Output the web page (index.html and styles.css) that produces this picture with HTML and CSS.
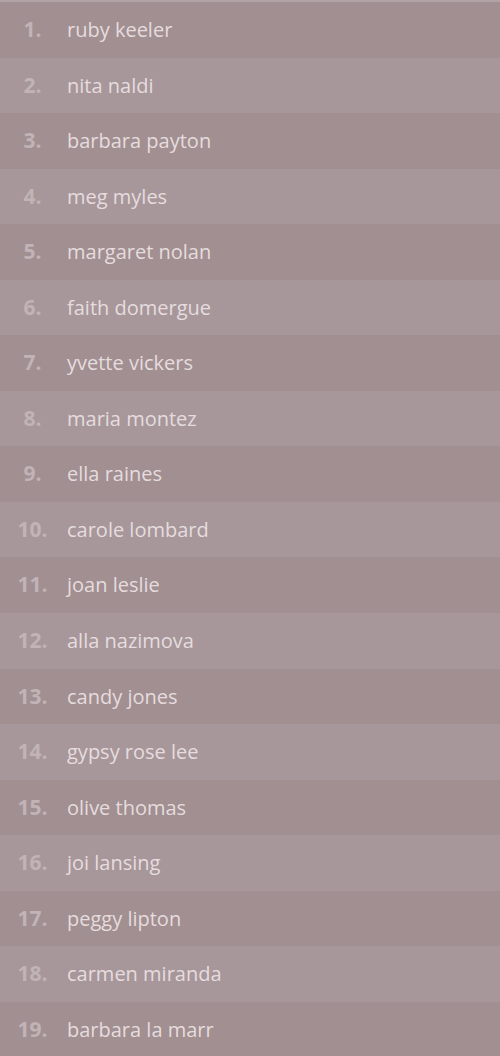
FILE: index.html
```html
<!DOCTYPE html>
<html lang="en">

<head>
    <meta charset="UTF-8">
    <meta name="viewport" content="width=device-width, initial-scale=1.0">
    <title>Actresses</title>
    <link rel="stylesheet" href="styles.css">
</head>

<body>
    <ol class="list">
        <li class="item"><span class="num">1.</span><span class="name">ruby keeler</span></li>
        <li class="item"><span class="num">2.</span><span class="name">nita naldi</span></li>
        <li class="item"><span class="num">3.</span><span class="name">barbara payton</span></li>
        <li class="item"><span class="num">4.</span><span class="name">meg myles</span></li>
        <li class="item"><span class="num">5.</span><span class="name">margaret nolan</span></li>
        <li class="item"><span class="num">6.</span><span class="name">faith domergue</span></li>
        <li class="item"><span class="num">7.</span><span class="name">yvette vickers</span></li>
        <li class="item"><span class="num">8.</span><span class="name">maria montez</span></li>
        <li class="item"><span class="num">9.</span><span class="name">ella raines</span></li>
        <li class="item"><span class="num">10.</span><span class="name">carole lombard</span></li>
        <li class="item"><span class="num">11.</span><span class="name">joan leslie</span></li>
        <li class="item"><span class="num">12.</span><span class="name">alla nazimova</span></li>
        <li class="item"><span class="num">13.</span><span class="name">candy jones</span></li>
        <li class="item"><span class="num">14.</span><span class="name">gypsy rose lee</span></li>
        <li class="item"><span class="num">15.</span><span class="name">olive thomas</span></li>
        <li class="item"><span class="num">16.</span><span class="name">joi lansing</span></li>
        <li class="item"><span class="num">17.</span><span class="name">peggy lipton</span></li>
        <li class="item"><span class="num">18.</span><span class="name">carmen miranda</span></li>
        <li class="item"><span class="num">19.</span><span class="name">barbara la marr</span></li>
    </ol>
</body>

</html>
```

FILE: styles.css
```css
body {
    margin: 0;
    font-family: "Open Sans", sans-serif;
    background-color: #a18f91;
    overflow: hidden;
}

.list {
    list-style: none;
    margin: 0;
    padding: 0;
    border-top: 2px solid #b2a3a6;
}

.item {
    display: flex;
    align-items: baseline;
    height: 55.55px;
    line-height: 55.55px;
    background-color: #a18f91;
}

.item:nth-child(even) {
    background-color: #a7979b;
}

.num {
    width: 65px;
    text-align: center;
    font-size: 21px;
    font-weight: bold;
    color: #c1b3b6;
}

.name {
    margin-left: 2px;
    font-size: 20px;
    color: #e6dcde;
}
```
